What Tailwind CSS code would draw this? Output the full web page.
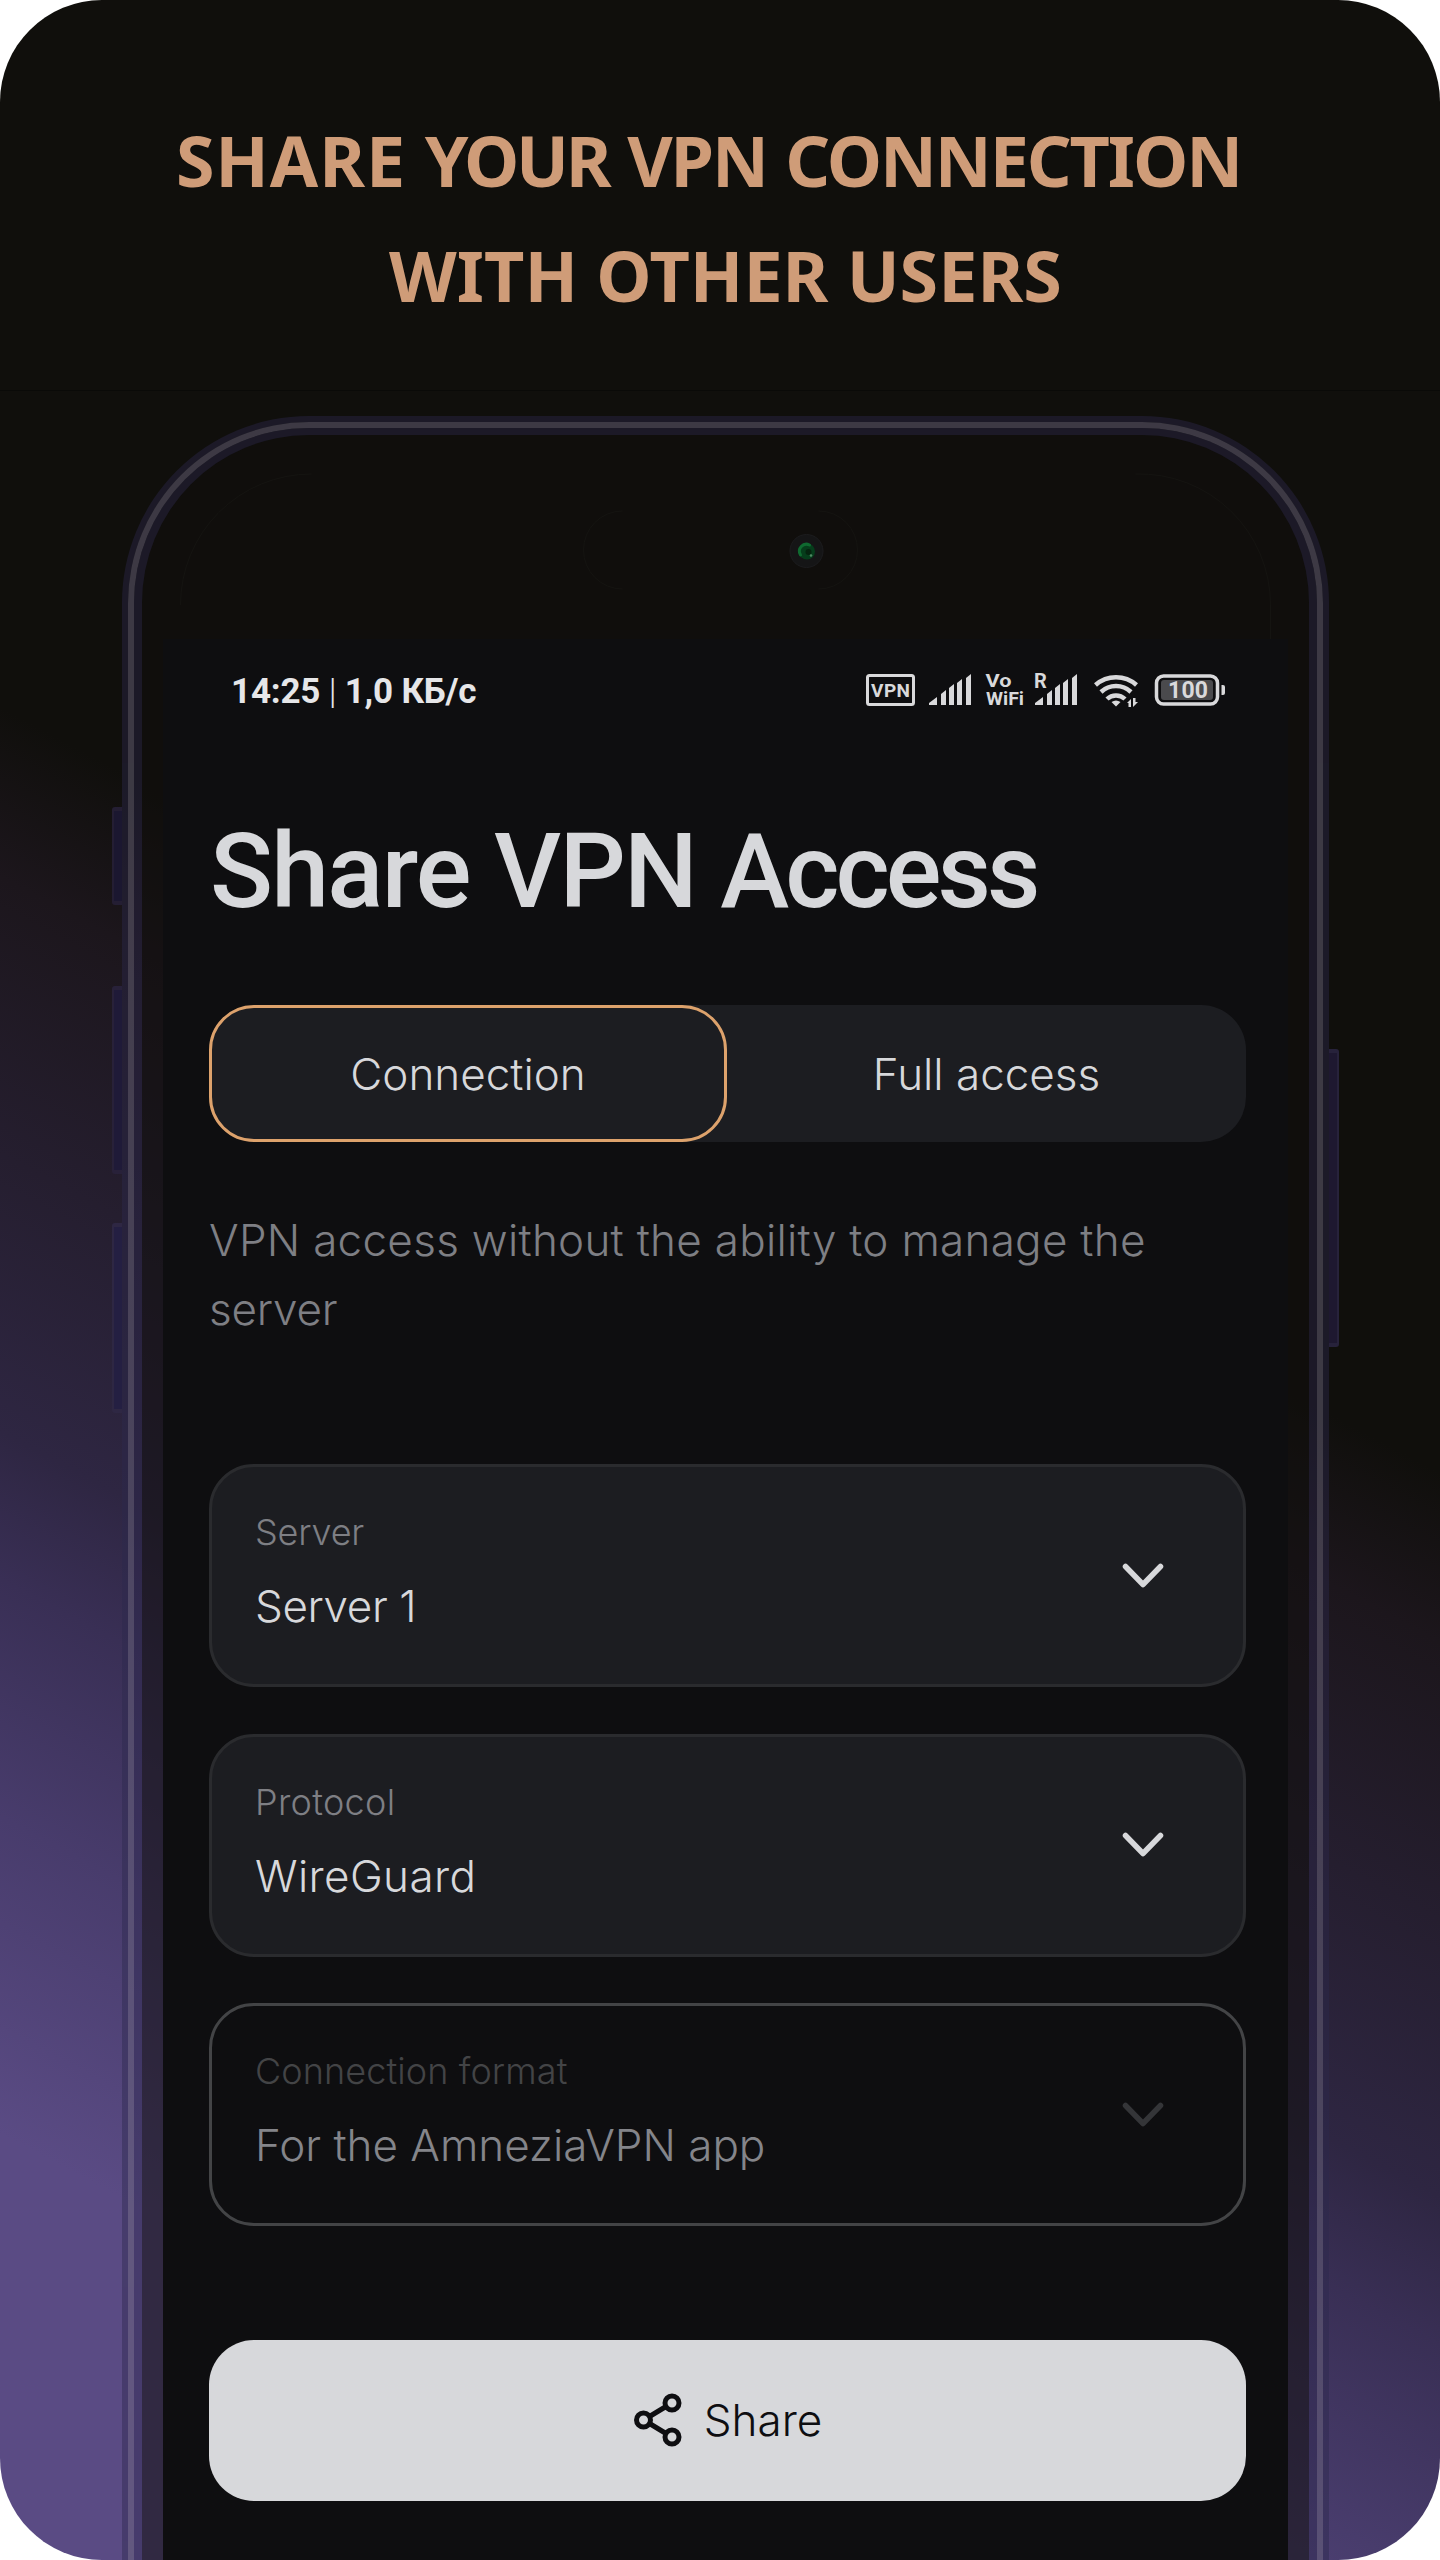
<!DOCTYPE html>
<html lang="en">
<head>
<meta charset="utf-8">
<title>Share VPN Access</title>
<script src="https://cdn.jsdelivr.net/npm/@tailwindcss/browser@4"></script>
</head>
<body class="bg-white">
<main class="relative h-[2560px] w-[1440px] overflow-hidden rounded-[102px] bg-[linear-gradient(208deg,#100f0c_1300px,#1c161c_1450px,#2e2642_1940px,#392f55_2070px,#483c6c_2280px,#5a4b84_2560px)] font-[Inter,sans-serif]">
  <header class="flex h-[390px] flex-col items-center pt-[103px] text-center font-['Noto_Sans',sans-serif] text-[70px] leading-[115px] font-bold whitespace-nowrap text-[#cf9c78]">
    <p class="mr-[23px] tracking-[-2.1px] [word-spacing:2.5px]"><span class="tracking-[0.9px]">SHARE</span> <span class="tracking-[-3.2px]">YOUR</span> VPN CONNECTION</p>
    <p class="ml-[11px]">WITH OTHER USERS</p>
  </header>
  <div class="h-[26px] border-t border-[#0a0a08]"></div>

  <!-- phone -->
  <section class="relative ml-[122px] w-[1207px]">
    <span class="absolute top-[391px] -left-[10px] h-[98px] w-[10px] rounded-l-[3px] border-y-4 border-l-2 border-[#2a2435]/60 bg-[#1b1730]"></span>
    <span class="absolute top-[570px] -left-[10px] h-[188px] w-[10px] rounded-l-[3px] border-y-4 border-l-2 border-[#2e273b]/60 bg-[#1f1a38]"></span>
    <span class="absolute top-[807px] -left-[10px] h-[190px] w-[10px] rounded-l-[3px] border-y-4 border-l-2 border-[#352d45]/60 bg-[#241f42]"></span>
    <span class="absolute top-[633px] -right-[10px] h-[298px] w-[10px] rounded-r-[3px] border-y-4 border-r-2 border-[#2c2740]/70 bg-[#1e1830]"></span>

    <div class="rounded-t-[187px] border-x-6 border-t-6 border-[rgba(44,41,77,0.43)]">
      <div class="rounded-t-[181px] border-x-[6.5px] border-t-6 border-[rgba(106,101,124,0.5)]">
        <div class="rounded-t-[175px] border-x-[8.5px] border-t-7 border-[rgba(44,41,77,0.43)] bg-[rgba(16,15,12,0.55)] bg-clip-padding">
          <div class="relative h-[204px]">
            <svg class="absolute inset-0 size-full" viewBox="0 0 1166 204" fill="none" stroke="#151411" stroke-width="1">
              <path d="M38 170A131 131 0 0 1 169 39M993 39A131 131 0 0 1 1128 170V204M676 76A39 39 0 0 1 676 154M480 76A39 39 0 0 0 480 154"/>
              <circle cx="664" cy="116" r="16.500" fill="#151516" stroke="#1c1c1e"/>
              <circle cx="664.500" cy="116.500" r="8" fill="#063d1b" stroke="none"/>
              <path d="M658 120a7 7 0 0 1 9-10" stroke="#0f6a30" stroke-width="3" stroke-linecap="round"/>
              <circle cx="666" cy="117" r="3" fill="#05240f" stroke="none"/>
              <circle cx="668.500" cy="120.500" r="1.300" fill="#4f8a63" stroke="none"/>
            </svg>
          </div>

          <div class="mr-[21px] ml-[21px] flex h-[1940px] flex-col bg-[#0e0e10] pt-[35px] pr-[42px] pl-[46px] text-[#d7d8db]">
            <div class="flex h-8 items-center justify-between pr-[20px] pl-[22px]">
              <div class="pt-[3px] font-[Roboto,sans-serif] text-[35px] leading-8 font-bold tracking-[-0.2px] whitespace-nowrap text-[#e6e6e8]">14:25 <span class="font-light">|</span> 1,0 КБ/с</div>
              <svg class="h-[36px] w-[360px] shrink-0 overflow-visible" viewBox="866 672 360 36" font-family="Roboto, sans-serif" fill="#d9d9db">
                <rect x="867.500" y="675.500" width="46" height="29" rx="2" fill="none" stroke="#d9d9db" stroke-width="3"/>
                <text x="871" y="697" font-size="19" font-weight="700" textLength="39">VPN</text>
                <path d="M929 705v-2l8-6v8zM941 705v-11l5-4v15zM949 705v-17l5-4v21zM957 705v-22l5-4v26zM966 705v-27l5-4v31z"/>
                <text x="985.500" y="687" font-size="19" font-weight="700" textLength="26" lengthAdjust="spacingAndGlyphs">Vo</text>
                <text x="986" y="705" font-size="19" font-weight="700" textLength="38" lengthAdjust="spacingAndGlyphs">WiFi</text>
                <text x="1034" y="688" font-size="20" font-weight="700">R</text>
                <path d="M1035 705v-2l8-6v8zM1047 705v-11l5-4v15zM1055 705v-17l5-4v21zM1063 705v-22l5-4v26zM1072 705v-27l5-4v31z"/>
                <path d="M1095.500 685a31 31 0 0 1 41 0M1101 692a22 22 0 0 1 30 0M1107 699a13 13 0 0 1 18 0" fill="none" stroke="#d9d9db" stroke-width="4.500"/>
                <path d="M1111.500 702q4.500-3 9 0l-4.500 4.500zM1127 703l4-4v8h-2.500v-4zM1133 698h2.500v4h2.500l-5 5z"/>
                <rect x="1156.500" y="676" width="61" height="28" rx="7" fill="none" stroke="#d9d9db" stroke-width="3.500"/>
                <rect x="1161" y="680" width="52" height="20" rx="3" fill="#4a4a4d"/>
                <path d="M1221.500 685h1.500q2 0 2 2v6q0 2-2 2h-1.500z"/>
                <text x="1168" y="698" font-size="23" font-weight="700" textLength="40">100</text>
              </svg>
            </div>

            <h1 class="mt-[115px] pl-px font-[Roboto,sans-serif] text-[104px] leading-[102px] font-medium tracking-[-1.7px] whitespace-nowrap">Share VPN <span class="tracking-[-4px]">Access</span></h1>

            <div class="mt-[82px] flex h-[137px] shrink-0 rounded-[45px] bg-[#1c1d21] text-[44px] font-light whitespace-nowrap">
              <div class="flex w-[518px] items-center justify-center rounded-[45px] border-[3px] border-[#dda26c]">Connection</div>
              <div class="flex flex-1 items-center justify-center">Full access</div>
            </div>

            <p class="mt-[64px] mb-[-2px] text-[44px] leading-[69px] font-light tracking-[0.28px] whitespace-nowrap text-[#7e7f84]">VPN access without the ability to manage the<br><span class="tracking-[-0.2px]">server</span></p>

            <div class="mt-[122px] flex flex-col gap-[46.500px] font-light whitespace-nowrap">
              <div class="flex h-[223px] items-center justify-between rounded-[45px] border-[3px] border-[#2a2b2e] bg-[#1c1d21] pr-[79px] pl-[43px]">
                <div class="flex h-[127px] flex-col gap-[27px]">
                  <span class="text-[36px] leading-10 tracking-[-0.2px] text-[#7e7f84]">Server</span>
                  <span class="text-[44px] leading-[54px] tracking-[-0.4px]">Server 1</span>
                </div>
                <svg class="h-[26px] w-[42px]" viewBox="0 0 42 26" fill="none" stroke="currentColor" stroke-width="5.500" stroke-linecap="round" stroke-linejoin="round"><path d="M3.500 3.500L21 21.500 38.500 3.500"/></svg>
              </div>
              <div class="flex h-[223px] items-center justify-between rounded-[45px] border-[3px] border-[#2a2b2e] bg-[#1c1d21] pr-[79px] pl-[43px]">
                <div class="flex h-[127px] flex-col gap-[27px]">
                  <span class="text-[36px] leading-10 tracking-[0.3px] text-[#7e7f84]">Protocol</span>
                  <span class="text-[44px] leading-[54px] tracking-[0.4px]">WireGuard</span>
                </div>
                <svg class="h-[26px] w-[42px]" viewBox="0 0 42 26" fill="none" stroke="currentColor" stroke-width="5.500" stroke-linecap="round" stroke-linejoin="round"><path d="M3.500 3.500L21 21.500 38.500 3.500"/></svg>
              </div>
              <div class="flex h-[223px] items-center justify-between rounded-[45px] border-[3px] border-[#434446] pr-[79px] pl-[43px]">
                <div class="flex h-[127px] flex-col gap-[27px]">
                  <span class="text-[36px] leading-10 tracking-[0.1px] text-[#434446]">Connection format</span>
                  <span class="text-[44px] leading-[54px] text-[#84858a]">For the AmneziaVPN app</span>
                </div>
                <svg class="h-[26px] w-[42px] text-[#343538]" viewBox="0 0 42 26" fill="none" stroke="currentColor" stroke-width="5.500" stroke-linecap="round" stroke-linejoin="round"><path d="M3.500 3.500L21 21.500 38.500 3.500"/></svg>
              </div>
            </div>

            <button class="mt-[114px] flex h-[161px] shrink-0 items-center justify-center gap-[21px] rounded-[45px] bg-[#d7d8db] pb-[2px] text-[44px] font-light whitespace-nowrap text-[#0e0e11]">
              <svg class="h-[54px] w-[50px]" viewBox="0 0 50 54" fill="none" stroke="currentColor" stroke-width="5"><circle cx="10.500" cy="27" r="7"/><circle cx="39" cy="10" r="7"/><circle cx="39" cy="44" r="7"/><path d="M16.500 23.500L33 13.500M16.500 30.500L33 40.500"/></svg>
              Share
            </button>
          </div>
        </div>
      </div>
    </div>
  </section>
</main>
</body>
</html>
